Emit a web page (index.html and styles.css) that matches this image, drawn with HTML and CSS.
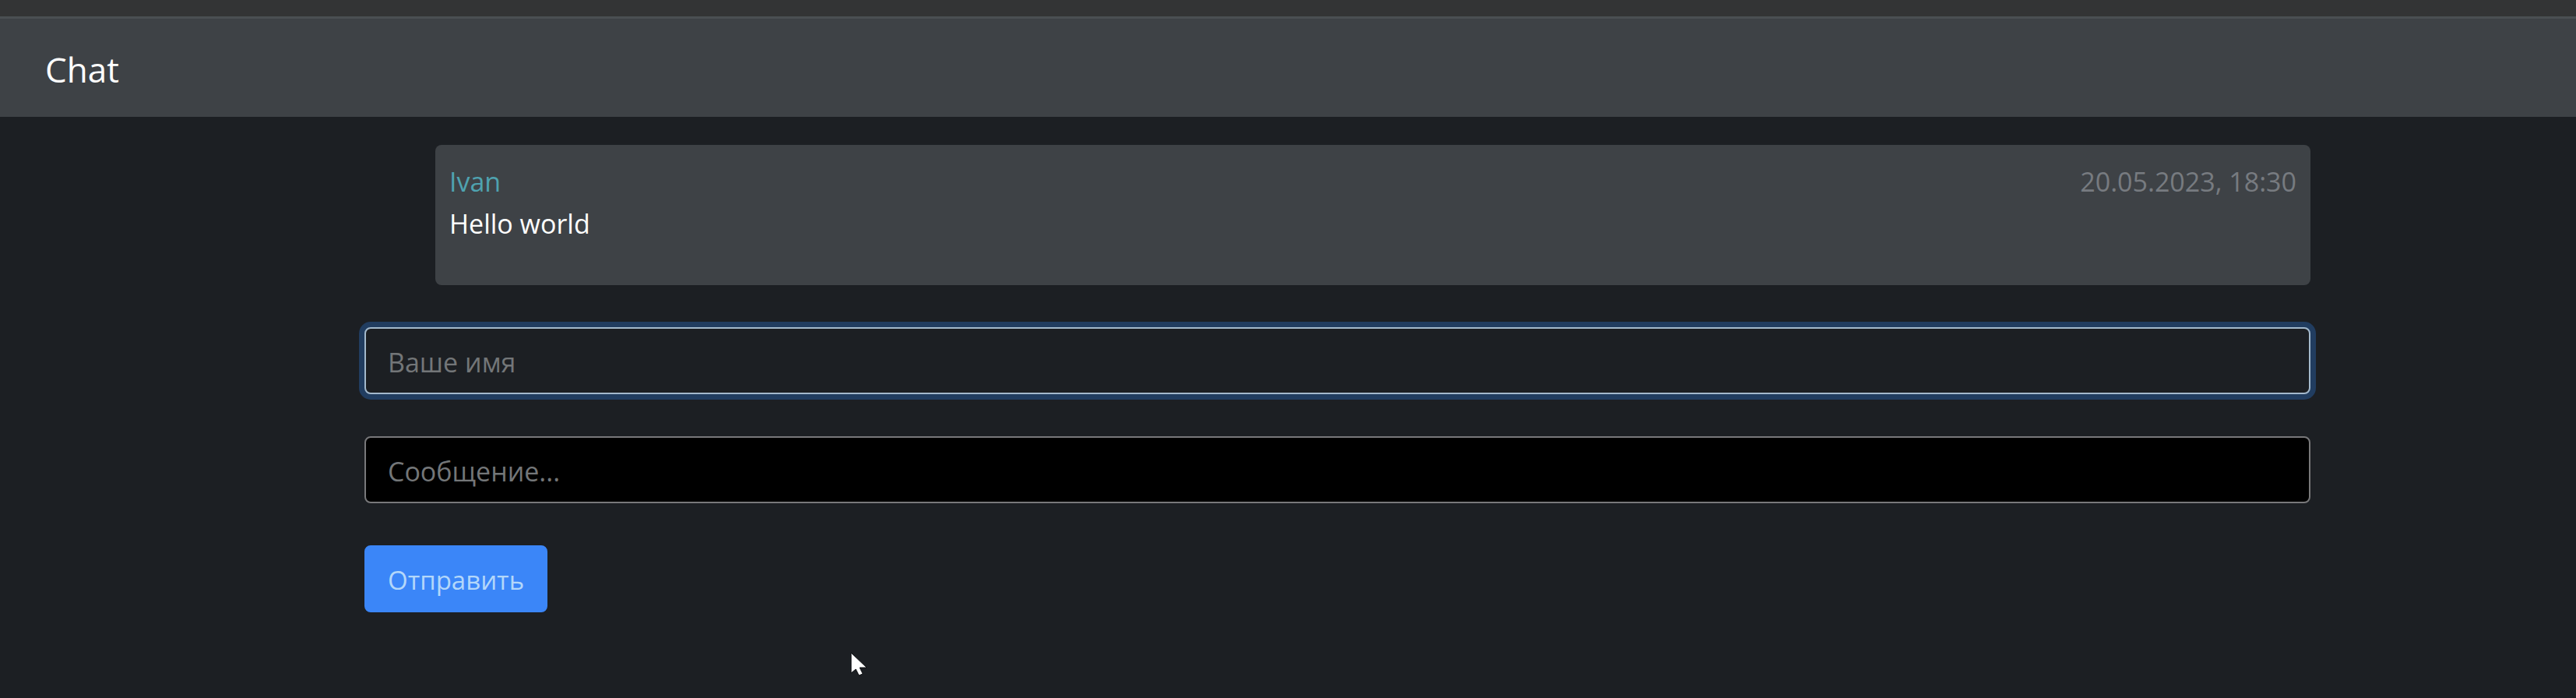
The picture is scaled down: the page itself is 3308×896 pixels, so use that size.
FILE: index.html
```html
<!DOCTYPE html>
<html lang="ru">
<head>
<meta charset="utf-8">
<title>Chat</title>
<link rel="stylesheet" href="styles.css">
</head>
<body>
<div class="window-edge"></div>
<header class="navbar"><a class="brand" href="#">Chat</a></header>
<main class="container">
  <ul class="messages">
    <li class="message">
      <div class="message-head">
        <span class="author">Ivan</span>
        <time class="date" datetime="2023-05-20T18:30">20.05.2023, 18:30</time>
      </div>
      <p class="message-text">Hello world</p>
    </li>
  </ul>
  <form class="form">
    <input class="field field-active" type="text" placeholder="Ваше имя" aria-label="Ваше имя">
    <input class="field" type="text" placeholder="Сообщение..." aria-label="Сообщение">
    <button class="submit" type="button">Отправить</button>
  </form>
</main>
<svg class="cursor" viewBox="0 0 22 32" aria-hidden="true"><path d="M1 1V27L7 22L11 30L16 28L12 20H21Z" fill="#fff" stroke="#0b0d10" stroke-width="1"/></svg>
</body>
</html>
```
FILE: styles.css
```css
* {
  box-sizing: border-box;
}

body {
  margin: 0;
  min-height: 100vh;
  background: #1c1f23;
  color: #fff;
  font-family: "Segoe UI", "Open Sans", "Noto Sans", sans-serif;
  font-size: 34px;
  line-height: 54px;
}

.window-edge {
  height: 21px;
  background: #333435;
}

.navbar {
  display: flex;
  align-items: center;
  height: 129px;
  padding: 4px 58px 0;
  background: #3e4246;
  border-top: 3px solid #4a4f52;
}

.brand {
  color: #fff;
  font-size: 44px;
  text-decoration: none;
}

.container {
  padding: 36px 341px 0 468px;
}

.messages {
  margin: 0 0 54px;
  padding: 0 0 0 91px;
  list-style: none;
}

.message {
  padding: 20px 18px 52px;
  border-radius: 8px;
  background: #3e4246;
}

.message-head {
  display: flex;
  justify-content: space-between;
}

.author {
  color: #4fa3b0;
}

.date {
  color: #777b80;
}

.message-text {
  margin: 0;
}

.form {
  display: flex;
  flex-direction: column;
  align-items: flex-start;
  gap: 54px;
}

.field,
.submit {
  height: 86px;
  padding: 4px 28px 0;
  border-radius: 8px;
  font: inherit;
}

.field {
  width: 100%;
  border: 2px solid #78787a;
  background: #000;
  color: #fff;
}

.field::placeholder {
  color: #737678;
  opacity: 1;
}

.field-active {
  border-color: #a3b9cc;
  background: #1c1f23;
  box-shadow: 0 0 0 7px #213d60;
}

.submit {
  border: 2px solid #3b86f8;
  background: #3b86f8;
  color: #b3d7fa;
  font-size: 33px;
}

.cursor {
  position: absolute;
  left: 1092px;
  top: 837px;
  width: 22px;
  height: 32px;
}
```
